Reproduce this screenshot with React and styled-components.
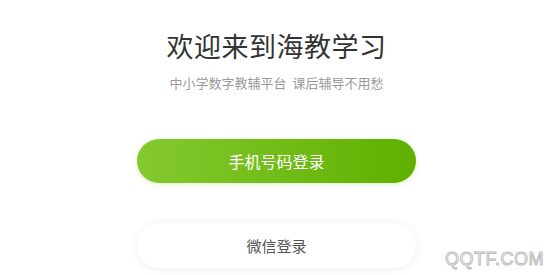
import React from "react";
import styled, { createGlobalStyle } from "styled-components";

const GlobalStyle = createGlobalStyle`
  html, body {
    margin: 0;
    padding: 0;
    background: #ffffff;
    font-family: "Noto Sans CJK SC", "Noto Sans", sans-serif;
  }
`;

export default function App() {
  return (
    <>
      <GlobalStyle />
      <Page>
        <Title>欢迎来到海教学习</Title>
        <Subtitle>中小学数字教辅平台&nbsp;&nbsp;课后辅导不用愁</Subtitle>
        <Actions>
          <LoginButton $primary>手机号码登录</LoginButton>
          <LoginButton>微信登录</LoginButton>
        </Actions>
        <Watermark>QQTF.COM</Watermark>
      </Page>
    </>
  );
}

const Page = styled.div`
  position: relative;
  width: 553px;
  height: 275px;
  overflow: hidden;
  display: flex;
  flex-direction: column;
  align-items: center;
  padding-top: 29px;
  box-sizing: border-box;
`;

const Title = styled.h1`
  margin: 0;
  font-size: 27px;
  line-height: 34px;
  font-weight: 400;
  color: #333333;
  letter-spacing: 0.5px;
`;

const Subtitle = styled.p`
  margin: 11px 0 0;
  font-size: 13px;
  line-height: 18px;
  color: #9a9a9a;
`;

const Actions = styled.div`
  display: flex;
  flex-direction: column;
  gap: 40px;
  margin-top: 47px;
`;

const LoginButton = styled.button`
  width: 279px;
  height: ${(p) => (p.$primary ? "44px" : "45px")};
  border: none;
  border-radius: 23px;
  font-family: inherit;
  font-size: ${(p) => (p.$primary ? "16px" : "15px")};
  color: ${(p) => (p.$primary ? "#ffffff" : "#555555")};
  background: ${(p) =>
    p.$primary ? "linear-gradient(90deg, #84c92f 0%, #5fb000 100%)" : "#ffffff"};
  box-shadow: ${(p) =>
    p.$primary
      ? "0 1px 4px rgba(110, 190, 20, 0.25)"
      : "0 1px 10px rgba(0, 0, 0, 0.07)"};
  cursor: pointer;
`;

const Watermark = styled.div`
  position: absolute;
  right: 9px;
  bottom: 5px;
  font-family: "Liberation Sans", Arial, sans-serif;
  font-size: 18px;
  color: #ffffff;
  -webkit-text-stroke: 1px #bdbdbd;
  letter-spacing: 0.5px;
`;
